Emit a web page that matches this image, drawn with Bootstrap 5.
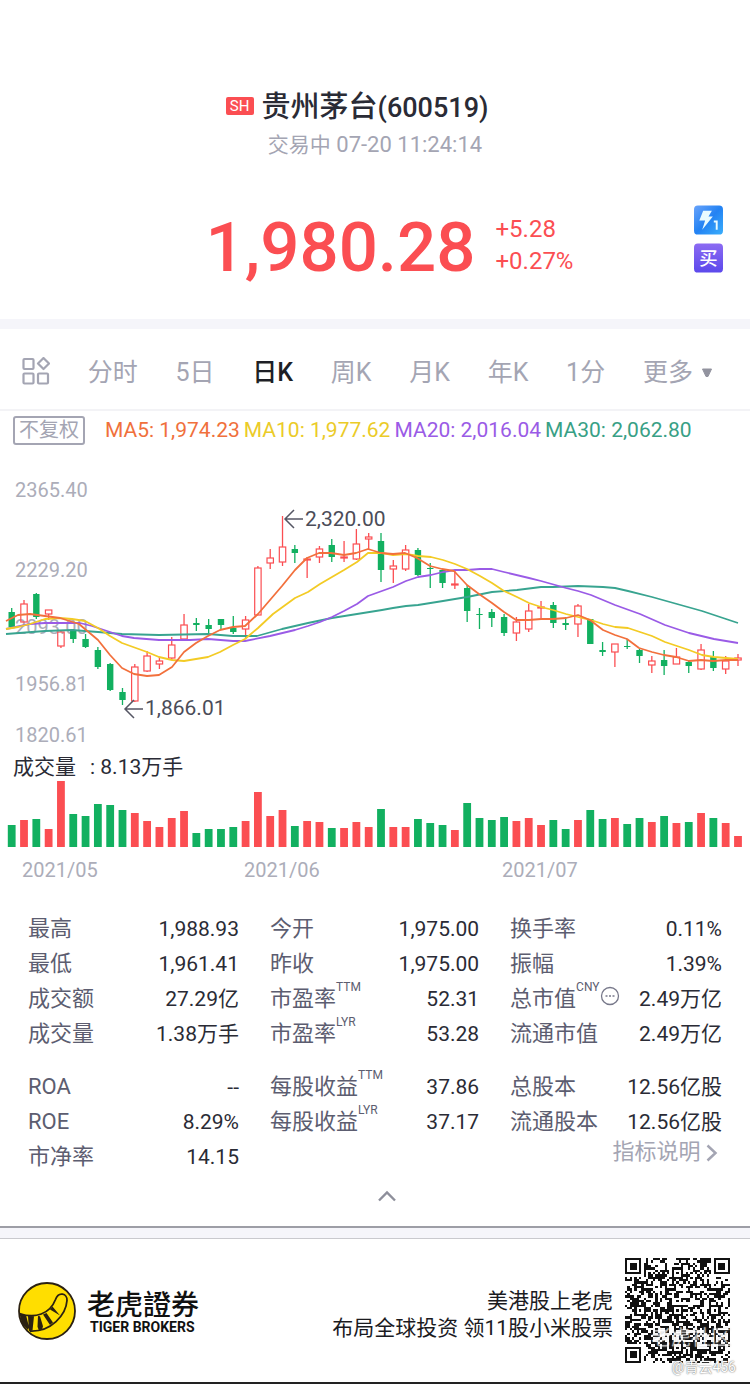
<!DOCTYPE html>
<html lang="zh-CN">
<head>
<meta charset="utf-8">
<meta name="viewport" content="width=device-width, initial-scale=1">
<title>贵州茅台(600519)</title>
<link href="https://cdn.jsdelivr.net/npm/bootstrap@5.3.0/dist/css/bootstrap.min.css" rel="stylesheet">
<style>
:root{--up:#fb4e52;--down:#12b060;--mute:#a4a5b3;--ink:#2a2b35;--label:#5c5d70;--band:#f5f5fa}
body{font-family:Roboto,"Noto Sans CJK SC",sans-serif;color:var(--ink);background:#fff;line-height:1.2}
button{font-family:inherit}
.quote-head{padding-top:89px;height:319px}
.title-row{padding-right:36px}
.exch-tag{background:var(--up);color:#fff;font-size:15px;line-height:18px;width:28px;border-radius:2px}
.stock-name{font-size:29px;line-height:36px}
.stock-name .code{font-size:27px}
.mute{color:var(--mute)}
.state{font-size:22px;line-height:28px;margin-top:5px}
.state .cn{font-size:21px}
.price-row{margin-top:47px;padding-left:29px}
.price{font-size:69px;line-height:84px;color:var(--up)}
.change{font-size:24px;line-height:32px;color:var(--up);padding-bottom:6px}
.side-tags{position:absolute;right:27px;top:-1px}
.band{height:10px;background:var(--band)}
.tabs{padding:8px 37px 0 22px;height:82px;border-bottom:2px solid #f3f3f6}
.tabs button{font-size:25px;line-height:32px;color:var(--mute)}
.tabs button.on{color:#1e1f26;font-weight:500}
.legend-row{padding:5px 13px 0;height:39px}
.adj{font-size:20px;line-height:25px;border:2px solid var(--mute);border-radius:3px;color:var(--mute);padding:0 4px}
.ma{font-size:21px;line-height:29px}
.chart text{font-size:20px;fill:#acadb9}
.chart .mark-val{font-size:21px;fill:#4b4c58}
.chart .vol-title{font-size:21px;fill:var(--ink)}
.stats-wrap{padding:25px 28px 0}
.stats{width:100%;table-layout:fixed}
.stats th{font-weight:400;font-size:22px;color:var(--label);white-space:nowrap;line-height:26px;padding:0;height:35px}
.stats th+td+th{padding-left:31px}
.stats td{font-size:21px;text-align:right;white-space:nowrap;line-height:26px;padding:0}
.stats .split th,.stats .split td{padding-top:18px;height:53px}
.stats sup{font-size:12px;top:-15px;line-height:0}
.note-link{color:var(--mute);text-decoration:none;font-size:22px}
.fold{height:54px;border-bottom:2px solid #9d9ea6}
.band-foot{border-bottom:1px solid #c9c9ce;height:11px}
.brand-foot{padding:0 20px 0 17px;height:145px;border-bottom:2px solid #222}
.brand-names{margin-left:10px}
.brand-cn{font-family:"Noto Sans CJK TC",sans-serif;font-size:28px;line-height:32px;font-weight:500;color:#111}
.brand-en{font-size:14px;line-height:16px;font-weight:700;color:#111;padding-left:3px}
.slogan{font-size:21px;line-height:27px;color:#1b1b1f}
.qr-box{width:105px}
.wm-site{position:absolute;left:26px;top:68px;font-size:20px;color:#fff;opacity:.65;white-space:nowrap;text-shadow:0 0 2px #999}
.wm-user{position:absolute;right:-6px;top:101px;font-size:14px;color:#fff;white-space:nowrap;text-shadow:0 0 1px #777,0 0 2px #888}
</style>
</head>
<body>
<header class="quote-head">
  <div class="title-row d-flex justify-content-center align-items-center gap-2">
    <span class="exch-tag text-center mb-1">SH</span>
    <h1 class="stock-name fw-medium m-0">贵州茅台<span class="code">(600519)</span></h1>
  </div>
  <p class="state mute text-center mb-0"><span class="cn">交易中</span> 07-20 11:24:14</p>
  <div class="price-row position-relative d-flex justify-content-center align-items-center">
    <span class="price fw-medium">1,980.28</span>
    <div class="change ms-3 ps-1"><div>+5.28</div><div>+0.27%</div></div>
    <div class="side-tags d-flex flex-column gap-2">
      <svg width="29" height="30" viewBox="0 0 30 30" role="img" aria-label="Level 1">
        <defs><linearGradient id="gb" x2="1" y2="1"><stop stop-color="#6aa4fb"/><stop offset=".5" stop-color="#2382f3"/><stop offset="1" stop-color="#3aaefb"/></linearGradient></defs>
        <rect width="30" height="30" rx="4" fill="url(#gb)"/>
        <path d="M9.500 5.500h9l-3.500 6h4.500L8.500 25l3-9.500H5.500z" fill="#e9fbff"/>
        <path d="M20.500 16.500h3v8.500" fill="none" stroke="#e9fbff" stroke-width="2"/>
      </svg>
      <svg width="29" height="30" viewBox="0 0 30 30" role="img" aria-label="买">
        <defs><linearGradient id="gp" x2="0" y2="1"><stop stop-color="#8c6bf2"/><stop offset="1" stop-color="#5c49ec"/></linearGradient></defs>
        <rect width="30" height="30" rx="4" fill="url(#gp)"/>
        <text x="15" y="22" text-anchor="middle" font-size="19" fill="#fff" font-weight="500">买</text>
      </svg>
    </div>
  </div>
</header>
<div class="band"></div>
<nav class="tabs d-flex justify-content-between align-items-center" aria-label="K线周期">
  <button class="btn p-0 border-0" aria-label="图表布局"><svg class="d-block mb-1" width="28" height="28" viewBox="0 0 28 28" fill="none" stroke="#a4a5b3" stroke-width="2.200"><rect x="1.500" y="2" width="10" height="10" rx="1"/><rect x="1.500" y="16.500" width="10" height="10" rx="1"/><rect x="16" y="16.500" width="10" height="10" rx="1"/><path d="M21.500 1l5.500 5.500-5.500 5.500-5.500-5.500z" stroke-linejoin="round"/></svg></button>
  <button class="btn p-0 border-0">分时</button>
  <button class="btn p-0 border-0">5日</button>
  <button class="btn p-0 border-0 on">日K</button>
  <button class="btn p-0 border-0">周K</button>
  <button class="btn p-0 border-0">月K</button>
  <button class="btn p-0 border-0">年K</button>
  <button class="btn p-0 border-0">1分</button>
  <button class="btn p-0 border-0 d-flex align-items-center gap-2">更多<svg width="12" height="10" viewBox="0 0 12 10"><path d="M1.500 1h9L7 8.500H5z" fill="#92939f" stroke="#92939f" stroke-linejoin="round"/></svg></button>
</nav>
<div class="legend-row d-flex align-items-start">
  <button class="adj bg-white">不复权</button>
  <div class="ma d-flex gap-1 ms-3 ps-1 text-nowrap">
    <span style="color:#f0703c">MA5: 1,974.23</span><span style="color:#ebcb28">MA10: 1,977.62</span><span style="color:#9a5be6">MA20: 2,016.04</span><span style="color:#38a085">MA30: 2,062.80</span>
  </div>
</div>
<svg class="chart w-100 d-block" id="chart" viewBox="0 450 750 436" role="img" aria-label="日K线图">
  <g><text x="15" y="497">2365.40</text><text x="15" y="577">2229.20</text><text x="15" y="634">2093.00</text><text x="15" y="691">1956.81</text><text x="15" y="742">1820.61</text></g>
  <g id="candles"></g>
  <g id="lines" fill="none" stroke-width="1.800" stroke-linejoin="round"></g>
  <g fill="none" stroke="#555664" stroke-width="1.500"><path d="M303 519h-18m9-9l-9 9 9 9"/><path d="M143 709h-18m9-9l-9 9 9 9"/></g>
  <text class="mark-val" x="305" y="526">2,320.00</text>
  <text class="mark-val" x="145" y="715">1,866.01</text>
  <text class="vol-title" x="13" y="774">成交量</text><text class="vol-title" x="90" y="774">: 8.13万手</text>
  <g id="volume"></g>
  <g><text x="22" y="877">2021/05</text><text x="244" y="877">2021/06</text><text x="502" y="877">2021/07</text></g>
</svg>
<section class="stats-wrap">
  <table class="stats">
    <colgroup><col style="width:13%"><col style="width:17.400%"><col style="width:20%"><col style="width:14.600%"><col style="width:20%"><col style="width:15%"></colgroup>
    <tbody>
    <tr><th scope="row">最高</th><td>1,988.93</td><th scope="row">今开</th><td>1,975.00</td><th scope="row">换手率</th><td>0.11%</td></tr>
    <tr><th scope="row">最低</th><td>1,961.41</td><th scope="row">昨收</th><td>1,975.00</td><th scope="row">振幅</th><td>1.39%</td></tr>
    <tr><th scope="row">成交额</th><td>27.29亿</td><th scope="row">市盈率<sup>TTM</sup></th><td>52.31</td><th scope="row">总市值<sup>CNY</sup><svg class="align-baseline" width="20" height="20" viewBox="0 0 20 20"><circle cx="10" cy="10" r="8.500" fill="none" stroke="#77788a" stroke-width="1.300"/><path d="M5.500 10h2M9 10h2M12.500 10h2" stroke="#77788a" stroke-width="1.600"/></svg></th><td>2.49万亿</td></tr>
    <tr><th scope="row">成交量</th><td>1.38万手</td><th scope="row">市盈率<sup>LYR</sup></th><td>53.28</td><th scope="row">流通市值</th><td>2.49万亿</td></tr>
    <tr class="split"><th scope="row">ROA</th><td>--</td><th scope="row">每股收益<sup>TTM</sup></th><td>37.86</td><th scope="row">总股本</th><td>12.56亿股</td></tr>
    <tr><th scope="row">ROE</th><td>8.29%</td><th scope="row">每股收益<sup>LYR</sup></th><td>37.17</td><th scope="row">流通股本</th><td>12.56亿股</td></tr>
    <tr><th scope="row">市净率</th><td>14.15</td><td colspan="2"></td><td colspan="2" class="align-top pe-1"><a href="#" class="note-link">指标说明 <svg width="12" height="18" viewBox="0 0 12 18" fill="none" stroke="#a4a5b3" stroke-width="2.500"><path d="M1.500 1.500L9.500 9l-8 7.500"/></svg></a></td></tr>
    </tbody>
  </table>
</section>
<div class="fold d-flex justify-content-center align-items-center ps-4 pb-2">
  <button class="btn p-0 border-0" aria-label="收起"><svg class="d-block" width="20" height="12" viewBox="0 0 20 12" fill="none" stroke="#8e8f9b" stroke-width="2.400"><path d="M2 10.500l8-8 8 8"/></svg></button>
</div>
<div class="band band-foot"></div>
<footer class="brand-foot d-flex align-items-center">
  <svg width="60" height="60" viewBox="0 0 60 60" role="img" aria-label="Tiger Brokers">
    <circle cx="30" cy="30" r="28" fill="#ffde00" stroke="#2b2112" stroke-width="1.800"/>
    <g fill="none" stroke="#2b2112" stroke-width="1.800"><path d="M2.500 32.500C18 38 33 33 38.500 18.500c3-8.500 12-6 11.500 1C49 34 34 51 13 50"/></g>
    <g fill="#2b2112"><path d="M2.500 32.500l6.500 1.500 3 12-1 3-6-6zM11 35l6 .2-1.500 14.300-3.500.5zM21 35l2 .200 3 10-1 3.500-3 1-1.500-4zM26 33.500l3.500-1.500 6.500 9.500-3 2.500zM33 28.500l2.500-3 7.500 9z"/></g>
  </svg>
  <div class="brand-names"><div class="brand-cn">老虎證券</div><div class="brand-en">TIGER BROKERS</div></div>
  <div class="slogan text-end ms-auto me-2 pe-1 pt-2">美港股上老虎<br>布局全球投资 领11股小米股票</div>
  <div class="qr-box position-relative">
    <svg id="qr" class="d-block w-100" viewBox="0 0 45 45" shape-rendering="crispEdges" role="img" aria-label="二维码"></svg>
    <span class="wm-site">老虎社区</span>
    <span class="wm-user">@青云456</span>
  </div>
</footer>
<script src="https://cdn.jsdelivr.net/npm/bootstrap@5.3.0/dist/js/bootstrap.bundle.min.js"></script>
<script>
// [colour, high, body top, body bottom, low, volume height]
const days = [
['g',608,612,627,628,22],['r',600,604,622,622,27],['g',593,594,617,619,28],['r',610,610,614,620,18],['r',630,632,646,648,66],
['g',629,630,639,643,33],['g',634,639,647,648,31],['g',647,650,667,669,43],['g',663,664,690,691,42],['g',688,692,700,705,37],
['r',664,667,701,702,34],['r',651,656,671,672,26],['r',657,661,664,669,20],['r',637,645,658,660,29],['r',614,625,639,640,36],
['g',618,623,625,631,14],['g',619,625,629,633,18],['g',619,619,625,630,18],['g',616,628,632,634,20],['r',616,620,629,638,26],
['r',566,568,615,615,55],['r',549,558,563,569,31],['r',516,547,562,566,37],['g',545,549,553,563,21],['r',557,559,560,578,26],
['r',546,549,557,563,25],['g',539,545,557,562,19],['r',541,557,558,562,19],['r',529,544,559,560,25],['r',533,537,539,549,20],
['g',533,541,570,582,38],['r',560,566,569,583,20],['r',545,550,569,571,20],['g',548,550,575,576,28],['g',563,568,569,588,24],
['g',569,570,583,588,22],['r',571,584,585,589,17],['g',585,588,611,622,44],['g',608,614,615,629,29],['g',609,612,618,627,27],
['g',614,617,633,636,30],['r',617,622,633,641,26],['r',604,611,629,632,29],['r',601,607,608,618,22],['g',602,605,623,628,27],
['g',617,623,625,630,18],['r',604,606,624,637,27],['g',619,619,644,644,37],['g',642,650,652,656,28],['r',644,644,652,667,29],
['g',639,646,647,649,23],['g',649,650,656,663,29],['r',656,661,665,673,25],['g',650,660,666,675,31],['r',648,657,664,664,24],
['g',661,662,666,673,25],['r',644,650,669,670,34],['g',651,657,668,671,29],['r',656,661,669,674,24],['r',654,658,660,666,11]];
const hue = {r:'#fb4e52', g:'#12b060'};
let candles = '', volume = '';
days.forEach(([c,h,t,b,l,v], i) => {
  const x = 11.7 + i*12.31, k = hue[c];
  candles += `<path d="M${x} ${h}V${t}M${x} ${b}V${l}" stroke="${k}" stroke-width="1.300"/>`;
  candles += c === 'r'
    ? `<rect x="${x-3.2}" y="${t}" width="6.400" height="${b-t}" fill="none" stroke="${k}" stroke-width="1.200"/>`
    : `<rect x="${x-3.2}" y="${t}" width="6.400" height="${Math.max(b-t,1)}" fill="${k}"/>`;
  volume += `<rect x="${x-3.9}" y="${847-v}" width="7.800" height="${v}" fill="${k}"/>`;
});
document.getElementById('candles').innerHTML = candles;
document.getElementById('volume').innerHTML = volume;
const lines = {
'#38a490':'6,634 45,631 72,630 98,632 122,634 159,635 208,634 233,636 245,636 257,636 282,629 308,623 332,618 357,614 382,610 393,608 406,606 418,605 443,601 467,597 492,592 517,590 541,587 553,587 578,586 603,587 615,588 628,591 652,597 677,604 702,611 726,619 738,623',
'#9a5be6':'6,629 30,624 45,623 80,623 92,626 110,632 122,636 134,638 159,640 190,640 208,639 233,641 245,641 270,636 295,630 308,626 320,622 332,617 344,611 357,604 368,596 393,587 406,581 418,577 431,575 443,572 455,570 467,570 480,569 492,569 504,572 529,578 541,581 566,588 578,591 591,595 615,605 640,614 665,625 689,633 714,639 738,643',
'#f3cb25':'6,629 18,627 30,624 45,619 60,618 72,619 85,621 98,628 110,636 122,643 147,652 159,657 172,660 184,661 208,657 220,652 233,645 245,639 258,628 273,614 295,598 308,592 320,584 332,577 344,570 357,562 368,553 382,553 393,555 406,554 418,556 431,557 443,560 455,564 467,569 480,576 492,583 504,591 517,597 529,603 541,607 553,610 566,614 578,617 591,620 603,624 615,627 628,628 640,632 652,636 665,642 677,646 689,650 702,655 714,657 726,658 738,659',
'#f2703c':'6,621 18,615 30,614 45,616 60,618 79,624 98,640 110,655 122,668 134,674 147,676 159,675 172,667 184,652 196,643 208,636 220,630 233,627 245,626 258,614 282,586 295,570 307,558 319,553 331,553 344,555 356,553 368,549 381,553 393,554 405,553 417,558 430,566 442,569 454,571 467,585 479,594 492,603 504,612 516,620 529,620 541,619 553,619 566,618 578,615 590,620 603,630 615,635 627,639 639,648 652,652 664,655 676,657 689,661 701,660 713,661 726,660 738,660'};
document.getElementById('lines').innerHTML = Object.entries(lines).map(([c,p]) => `<polyline points="${p}" stroke="${c}"/>`).join('');

// QR symbol, version 7: finder and alignment patterns over a seeded field
const N = 45, ring = (x,y,cx,cy) => Math.max(Math.abs(x-cx), Math.abs(y-cy));
let seed = 600519, d = '';
for (let y = 0; y < N; y++) for (let x = 0; x < N; x++) {
  seed = (seed*1103515245 + 12345) % 2147483648;
  let on = (seed >> 16) % 2;
  if (x === 6 || y === 6) on = (x+y+1) % 2;
  for (const [cx,cy] of [[6,22],[22,6],[22,22],[38,22],[22,38],[38,38]]) {
    const r = ring(x,y,cx,cy); if (r <= 2) on = r !== 1;
  }
  for (const [cx,cy] of [[3,3],[41,3],[3,41]]) {
    const r = ring(x,y,cx,cy); if (r <= 4) on = r <= 1 || r === 3;
  }
  if (on) d += `M${x} ${y}h1v1h-1z`;
}
document.getElementById('qr').innerHTML = `<path d="${d}" fill="#111"/>`;
</script>
</body>
</html>
